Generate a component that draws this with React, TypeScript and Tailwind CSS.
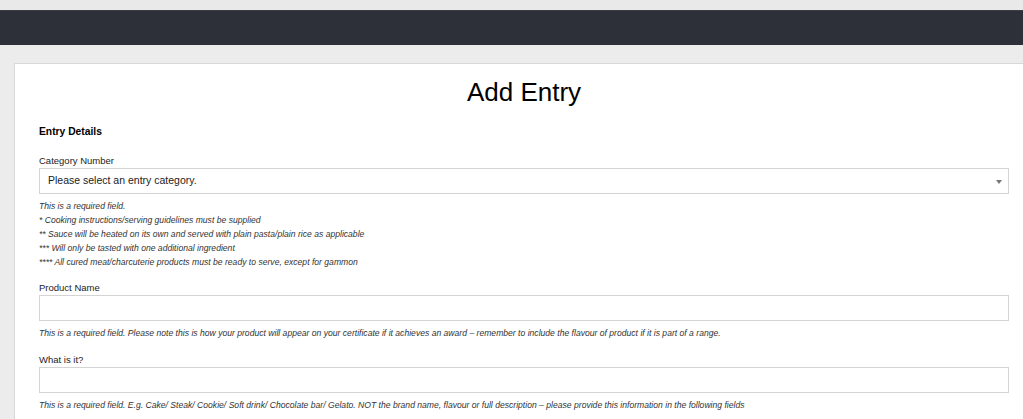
const Help = ({ children }: { children: React.ReactNode }) => (
  <p className="text-[8.6px] italic leading-[14px] text-[#333]">{children}</p>
)

const Label = ({ children }: { children: React.ReactNode }) => (
  <label className="block text-[9.5px] leading-[12px] text-[#222] mb-[1px]">{children}</label>
)

const TextInput = () => (
  <input
    type="text"
    className="block w-full h-[26px] border border-[#d4d4d4] bg-white px-2 text-[10.5px] outline-none"
  />
)

export default function App() {
  return (
    <div
      className="min-h-[419px] bg-[#ececec] overflow-hidden"
      style={{ fontFamily: '"Liberation Sans", Arial, sans-serif' }}
    >
      <div className="h-[10px] bg-[#e9e9e9]" />
      <div className="h-[35px] bg-[#2d3038] border-t border-[#3a3d44]" />
      <div className="pt-[18px] pl-[14px]">
        <div className="bg-white border-t border-l border-[#d8d8d8] pl-[24px] pr-[14px] pb-8">
          <h1 className="text-center text-[26px] leading-[30px] text-black pt-[13px] pb-[19px]">Add Entry</h1>
          <h2 className="text-[10.3px] font-bold leading-[12px] text-black mb-[17px]">Entry Details</h2>

          <Label>Category Number</Label>
          <div className="relative h-[26px] border border-[#d4d4d4] bg-white flex items-center px-2 mb-[5px]">
            <span className="text-[10.5px] text-[#222]">Please select an entry category.</span>
            <span className="absolute right-[6px] top-[11px] w-0 h-0 border-l-[3px] border-r-[3px] border-t-[4px] border-l-transparent border-r-transparent border-t-[#777]" />
          </div>
          <Help>This is a required field.</Help>
          <Help>* Cooking instructions/serving guidelines must be supplied</Help>
          <Help>** Sauce will be heated on its own and served with plain pasta/plain rice as applicable</Help>
          <Help>*** Will only be tasted with one additional ingredient</Help>
          <Help>**** All cured meat/charcuterie products must be ready to serve, except for gammon</Help>

          <div className="mt-[13px]">
            <Label>Product Name</Label>
            <TextInput />
            <div className="mt-[5px]">
              <Help>
                This is a required field. Please note this is how your product will appear on your certificate if it
                achieves an award – remember to include the flavour of product if it is part of a range.
              </Help>
            </div>
          </div>

          <div className="mt-[14px]">
            <Label>What is it?</Label>
            <TextInput />
            <div className="mt-[5px]">
              <Help>
                This is a required field. E.g. Cake/ Steak/ Cookie/ Soft drink/ Chocolate bar/ Gelato. NOT the brand
                name, flavour or full description – please provide this information in the following fields
              </Help>
            </div>
          </div>
        </div>
      </div>
    </div>
  )
}
